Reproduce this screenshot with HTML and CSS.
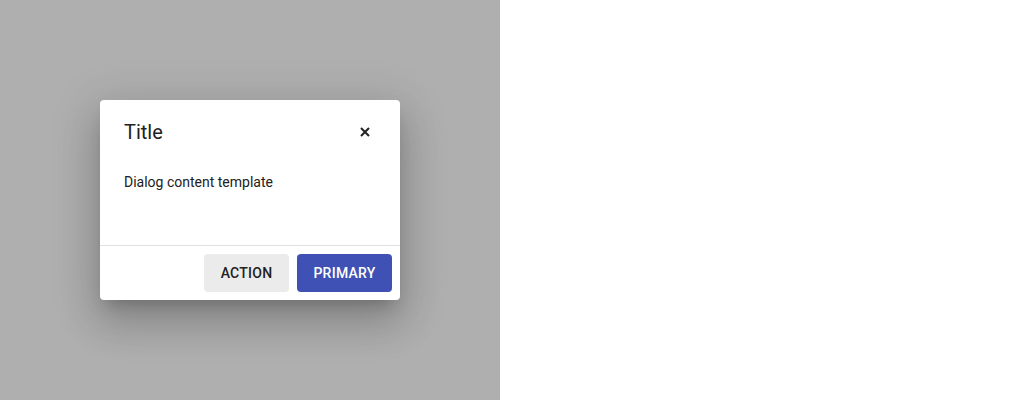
FILE: index.html
```html
<!DOCTYPE html>
<html>
<head>
<meta charset="utf-8">
<link rel="stylesheet" href="styles.css">
</head>
<body>
<div class="stage">
  <div class="backdrop">
    <div class="dialog">
      <div class="dialog-header">
        <span class="dialog-title">Title</span>
        <button class="close" aria-label="Close">
          <svg width="10" height="10" viewBox="0 0 10 10"><path d="M1 1L9 9M9 1L1 9" stroke="#222" stroke-width="2" fill="none"/></svg>
        </button>
      </div>
      <div class="dialog-content">Dialog content template</div>
      <div class="dialog-footer">
        <button class="btn btn-secondary">Action</button>
        <button class="btn btn-primary">Primary</button>
      </div>
    </div>
  </div>
  <div class="blank"></div>
</div>
</body>
</html>
```
FILE: styles.css
```css
* { box-sizing: border-box; }
html, body { margin: 0; padding: 0; }
body {
  font-family: Roboto, "Liberation Sans", sans-serif;
  background: #fff;
  color: #212121;
}
.stage {
  display: flex;
  width: 1024px;
  height: 400px;
}
.backdrop {
  width: 500px;
  height: 400px;
  background: #afafaf;
  padding: 100px;
}
.blank { flex: 1; background: #fff; }
.dialog {
  width: 300px;
  height: 200px;
  background: #fff;
  border-radius: 4px;
  display: flex;
  flex-direction: column;
  box-shadow: 0 11px 15px -7px rgba(0,0,0,0.2), 0 24px 38px 3px rgba(0,0,0,0.14), 0 9px 46px 8px rgba(0,0,0,0.12);
}
.dialog-header {
  display: flex;
  align-items: center;
  justify-content: space-between;
  padding: 16px 23px 0 24px;
  height: 48px;
}
.dialog-title {
  font-size: 20px;
  line-height: 32px;
  color: #212121;
}
.close {
  width: 24px;
  height: 24px;
  border: 0;
  background: none;
  padding: 0;
  display: flex;
  align-items: center;
  justify-content: center;
}
.dialog-content {
  flex: 1;
  padding: 24px 24px 0;
  font-size: 14px;
  line-height: 20px;
  color: #212121;
}
.dialog-footer {
  border-top: 1px solid #e0e0e0;
  display: flex;
  justify-content: flex-end;
  gap: 8px;
  padding: 8px;
}
.btn {
  width: auto;
  height: 38px;
  border: 0;
  border-radius: 4px;
  padding: 0 16px;
  font-family: Roboto, "Liberation Sans", sans-serif;
  font-size: 14px;
  font-weight: 500;
  text-transform: uppercase;
  letter-spacing: 0.25px;
}
.btn-secondary { background: #ebebeb; color: #212121; min-width: 85px; }
.btn-primary { background: #3f51b5; color: #fff; min-width: 95px; }
```
